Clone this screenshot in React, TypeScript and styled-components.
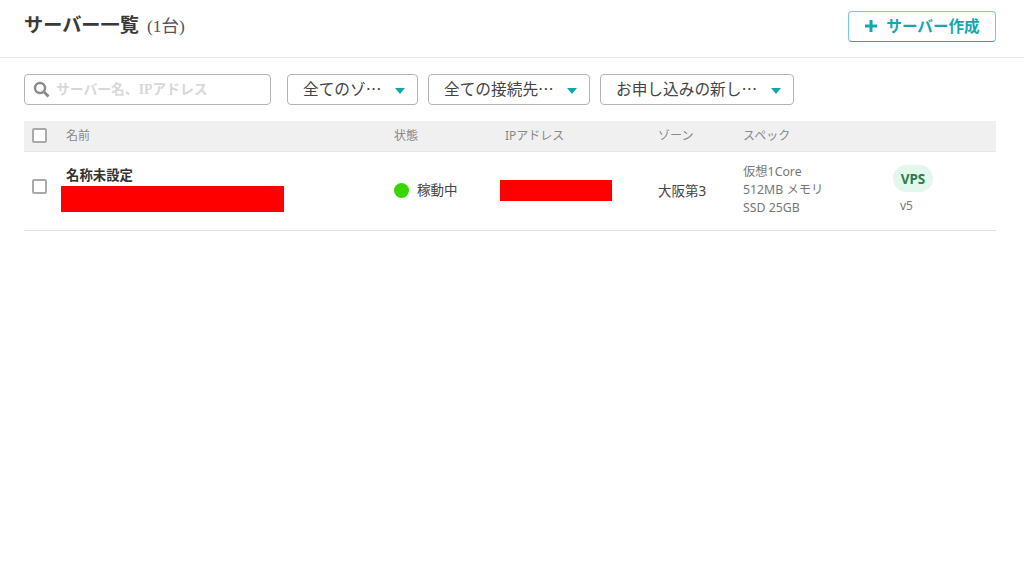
import React from "react";
import styled, { createGlobalStyle } from "styled-components";

const Global = createGlobalStyle`
  html, body { margin: 0; padding: 0; background: #fff; }
  body { font-family: "Noto Sans", "Noto Sans CJK JP", sans-serif; color: #333; }
`;
const Page = styled.div`width: 1024px; height: 561px; overflow: hidden; background: #fff;`;
const Header = styled.header`
  height: 58px; box-sizing: border-box; border-bottom: 1px solid #e8e8e8;
  display: flex; align-items: center; justify-content: space-between;
  padding: 0 28px 4px 24px;
`;
const TitleRow = styled.div`display: flex; align-items: baseline; gap: 8px; margin-top: -4px;`;
const Title = styled.h1`margin: 0; font-size: 19.2px; font-weight: 700; color: #3a3a3a; line-height: 26px;`;
const Count = styled.span`font-size: 17.5px; color: #555; font-family: "Liberation Serif", "Noto Sans CJK JP", serif;`;
const CreateButton = styled.button`
  width: 148px; height: 31px; box-sizing: border-box; padding: 0 0 2px; background: #fff;
  border: 1px solid #6fcfd3; border-bottom-color: #22aab2; border-radius: 4px;
  color: #13a8b0; font: 700 15.6px/1 "Noto Sans CJK JP", sans-serif;
  display: flex; align-items: center; justify-content: center; gap: 8px;
`;
const Filters = styled.div`display: flex; align-items: center; padding: 16px 0 0 24px; height: 31px;`;
const Search = styled.div`
  width: 247px; height: 31px; box-sizing: border-box; border: 1px solid #b4b4b4; border-radius: 4px;
  display: flex; align-items: center; gap: 6px; padding-left: 8px; margin-right: 16px;
`;
const Placeholder = styled.span`
  font: 700 13.8px "Liberation Serif", "Noto Sans CJK JP", serif; color: #d8d8d8; white-space: nowrap; margin-top: -4px;
`;
const Select = styled.div<{ $w: number; $gap: number }>`
  width: ${p => p.$w}px; height: 31px; box-sizing: border-box; border: 1px solid #b4b4b4; border-radius: 4px;
  display: flex; align-items: center; justify-content: space-between;
  padding: 0 12px 2px 15px; margin-right: ${p => p.$gap}px; white-space: nowrap;
  font: 400 15.7px "Noto Sans CJK JP", sans-serif; color: #444;
`;
const Caret = styled.span`
  width: 0; height: 0; margin-top: 4px; border-left: 5px solid transparent; border-right: 5px solid transparent;
  border-top: 6px solid #12a5a8;
`;
const Table = styled.div`margin: 16px 28px 0 24px;`;
const columns = "42px 328px 111px 153px 85px 150px 1fr";
const HeadRow = styled.div`
  display: grid; grid-template-columns: ${columns}; align-items: center;
  height: 31px; box-sizing: border-box; background: #f0f0f0; border-bottom: 1px solid #e8e8e8;
  padding-bottom: 2px; font-size: 12px; color: #888;
`;
const BodyRow = styled.div`
  display: grid; grid-template-columns: ${columns}; align-items: center;
  height: 79px; box-sizing: border-box; border-bottom: 1px solid #e4e4e4; font-size: 13.5px; color: #444;
`;
const CheckCell = styled.div<{ $up?: number }>`padding-left: 8px; display: flex; margin-top: ${p => p.$up ?? 0}px;`;
const Check = styled.span`width: 15px; height: 15px; box-sizing: border-box; border: 2px solid #aaa; border-radius: 2px; background: #fff;`;
const NameCell = styled.div`display: flex; flex-direction: column; margin-top: -6px;`;
const Name = styled.div`font-size: 13.4px; font-weight: 700; color: #333; line-height: 21px;`;
const Redact = styled.div<{ $w: number; $h: number; $up?: number }>`
  width: ${p => p.$w}px; height: ${p => p.$h}px; background: #f00; margin-left: -5px; margin-top: ${p => p.$up ?? 0}px;
`;
const Status = styled.div`display: flex; align-items: center; gap: 8px; margin-top: -5px;`;
const Dot = styled.span`width: 15px; height: 15px; border-radius: 50%; background: #36d800; margin-top: 4px;`;
const Zone = styled.div`font-size: 13.5px; margin-top: -3px;`;
const Spec = styled.div`font-size: 12.3px; line-height: 18px; color: #777; margin-top: -3px;`;
const Kind = styled.div`display: flex; flex-direction: column; align-items: flex-start; margin-top: -2px;`;
const Badge = styled.span`
  width: 40px; height: 27px; border-radius: 14px; background: #e2f8ec; color: #2a7d4f;
  font-size: 13.5px; font-weight: 700; display: flex; align-items: center; justify-content: center;
`;
const Version = styled.span`font-size: 12px; color: #777; margin: 5px 0 0 7px; line-height: 18px;`;

export default function App() {
  return (
    <Page>
      <Global />
      <Header>
        <TitleRow>
          <Title>サーバー一覧</Title>
          <Count>(1台)</Count>
        </TitleRow>
        <CreateButton>
          <svg width="14" height="14" viewBox="0 0 14 14"><path d="M7 1v12M1 7h12" stroke="#13a8b0" strokeWidth="3" /></svg>
          サーバー作成
        </CreateButton>
      </Header>
      <Filters>
        <Search>
          <svg width="17" height="17" viewBox="0 0 17 17" fill="none">
            <circle cx="7" cy="7" r="5" stroke="#8a8a8a" strokeWidth="2.4" />
            <path d="M10.8 10.8 15.5 15.5" stroke="#8a8a8a" strokeWidth="2.8" />
          </svg>
          <Placeholder>サーバー名、IPアドレス</Placeholder>
        </Search>
        <Select $w={131} $gap={10}>全てのゾ…<Caret /></Select>
        <Select $w={162} $gap={10}>全ての接続先…<Caret /></Select>
        <Select $w={194} $gap={0}>お申し込みの新し…<Caret /></Select>
      </Filters>
      <Table>
        <HeadRow>
          <CheckCell><Check /></CheckCell>
          <div>名前</div>
          <div>状態</div>
          <div>IPアドレス</div>
          <div>ゾーン</div>
          <div>スペック</div>
          <div />
        </HeadRow>
        <BodyRow>
          <CheckCell $up={-10}><Check /></CheckCell>
          <NameCell>
            <Name>名称未設定</Name>
            <Redact $w={223} $h={26} />
          </NameCell>
          <Status><Dot />稼動中</Status>
          <Redact $w={112} $h={21} $up={-2} />
          <Zone>大阪第3</Zone>
          <Spec>仮想1Core<br />512MB メモリ<br />SSD 25GB</Spec>
          <Kind>
            <Badge>VPS</Badge>
            <Version>v5</Version>
          </Kind>
        </BodyRow>
      </Table>
    </Page>
  );
}
